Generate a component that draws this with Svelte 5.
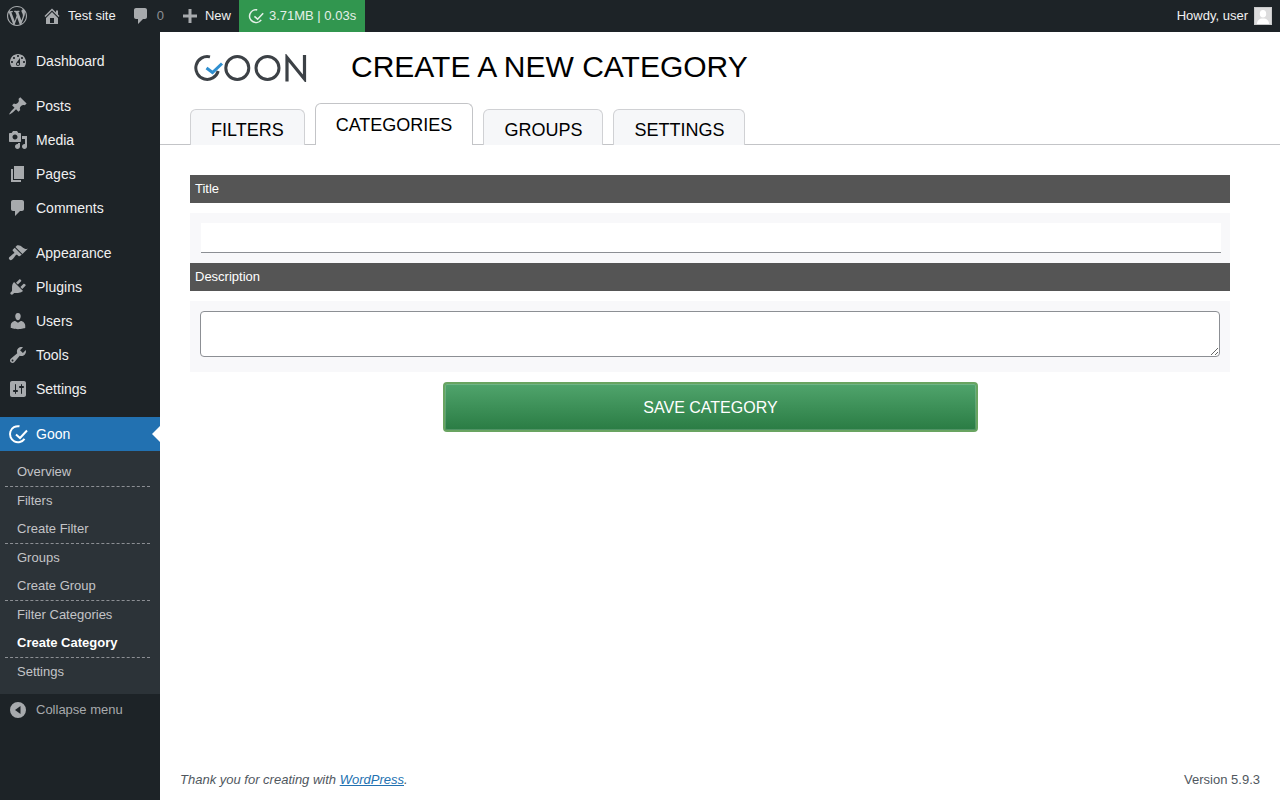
<script>
  const icons = {
    dashboard: "M3.76 16h12.48c1.1-1.37 1.76-3.11 1.76-5 0-4.42-3.58-8-8-8s-8 3.58-8 8c0 1.89.66 3.63 1.76 5zM10 4c.55 0 1 .45 1 1s-.45 1-1 1-1-.45-1-1 .45-1 1-1zM6 6c.55 0 1 .45 1 1s-.45 1-1 1-1-.45-1-1 .45-1 1-1zm8 0c.55 0 1 .45 1 1s-.45 1-1 1-1-.45-1-1 .45-1 1-1zm-5.37 5.55L12 7v6c0 1.1-.9 2-2 2s-2-.9-2-2c0-.57.24-1.08.63-1.45zM4 10c.55 0 1 .45 1 1s-.45 1-1 1-1-.45-1-1 .45-1 1-1zm12 0c.55 0 1 .45 1 1s-.45 1-1 1-1-.45-1-1 .45-1 1-1zm-5 3c0-.55-.45-1-1-1s-1 .45-1 1 .45 1 1 1 1-.45 1-1z",
    posts: "M10.44 3.02l1.82-1.82 6.36 6.35-1.83 1.82c-1.05-.68-2.48-.57-3.41.36l-.75.75c-.92.93-1.04 2.35-.35 3.41l-1.83 1.82-2.41-2.41-2.8 2.79c-.42.42-3.38 2.71-3.8 2.29s1.86-3.39 2.28-3.81l2.79-2.79L4.1 9.36l1.83-1.82c1.05.69 2.48.57 3.41-.36l.75-.75c.93-.92 1.05-2.35.35-3.41z",
    media: "M13 11V4c0-.55-.45-1-1-1h-1.67L9 1H5L3.67 3H2c-.55 0-1 .45-1 1v7c0 .55.45 1 1 1h10c.55 0 1-.45 1-1zM7 4.5c1.38 0 2.5 1.12 2.5 2.5S8.38 9.5 7 9.5 4.5 8.38 4.5 7 5.62 4.5 7 4.5zM14 6h5v10.5c0 1.38-1.12 2.5-2.5 2.5S14 17.88 14 16.5s1.12-2.5 2.5-2.5c.17 0 .34.02.5.05V9h-3V6zm-4 8.05V13h2v3.5c0 1.38-1.12 2.5-2.5 2.5S7 17.88 7 16.5 8.12 14 9.5 14c.17 0 .34.02.5.05z",
    pages: "M6 15V2h10v13H6zm-1 1h8v2H3V5h2v11z",
    comments: "M5 2h9c1.1 0 2 .9 2 2v7c0 1.1-.9 2-2 2h-2l-5 5v-5H5c-1.1 0-2-.9-2-2V4c0-1.1.9-2 2-2z",
    appearance: "M14.48 11.06L7.41 3.99l1.5-1.5c.5-.56 2.3-.47 3.51.32 1.21.8 1.43 1.28 2.91 2.1 1.18.64 2.45 1.26 4.45.85zm-.71.71L6.7 4.7 4.93 6.47c-.39.39-.39 1.02 0 1.41l1.06 1.06c.39.39.39 1.03 0 1.42-.6.6-1.43 1.11-2.21 1.69-.35.26-.7.53-1.01.84C1.43 13.71-.03 15.16 1.42 16.6c1.44 1.45 2.89-.01 4.02-1.36.3-.32.57-.67.84-1.02.57-.78 1.08-1.61 1.68-2.21.39-.39 1.03-.39 1.42 0l1.06 1.06c.39.39 1.02.39 1.41 0z",
    plugins: "M13.11 4.36L9.87 7.6 8 5.73l3.24-3.24c.35-.34 1.05-.2 1.56.32.52.51.66 1.21.31 1.55zm-8 1.77l.91-1.12 9.01 9.01-1.19.84c-.71.71-2.63 1.16-3.82 1.16H6.14L4.9 17.26c-.59.59-1.54.59-2.12 0-.59-.58-.59-1.53 0-2.12l1.24-1.24v-3.88c0-1.13.4-3.19 1.09-3.89zm7.26 3.97l3.24-3.24c.34-.35 1.04-.21 1.55.31.52.51.66 1.21.31 1.55l-3.24 3.25z",
    users: "M10 9.25c-2.27 0-2.73-3.44-2.73-3.44C7 4.02 7.82 2 9.97 2c2.16 0 2.98 2.02 2.71 3.81 0 0-.41 3.44-2.68 3.44zm0 2.57L12.72 10c2.39 0 4.52 2.33 4.52 4.53v2.49s-3.65 1.13-7.24 1.13c-3.65 0-7.24-1.13-7.24-1.13v-2.49c0-2.25 1.94-4.48 4.47-4.48z",
    tools: "M16.68 9.77c-1.34 1.34-3.3 1.67-4.95.99l-5.41 6.52c-.99.99-2.59.99-3.58 0s-.99-2.59 0-3.57l6.52-5.42c-.68-1.65-.35-3.61.99-4.95 1.28-1.28 3.12-1.62 4.72-1.06l-2.89 2.89 2.82 2.82 2.86-2.87c.53 1.58.18 3.39-1.08 4.65zM3.81 16.21c.4.39 1.04.39 1.43 0 .4-.4.4-1.04 0-1.43-.39-.4-1.03-.4-1.43 0-.39.39-.39 1.03 0 1.43z",
    settings: "M18 16V4c0-1.1-.9-2-2-2H4c-1.1 0-2 .9-2 2v12c0 1.1.9 2 2 2h12c1.1 0 2-.9 2-2zM8 11h1c.55 0 1 .45 1 1s-.45 1-1 1H8v1.5c0 .28-.22.5-.5.5s-.5-.22-.5-.5V13H6c-.55 0-1-.45-1-1s.45-1 1-1h1V5.5c0-.28.22-.5.5-.5s.5.22.5.5V11zm5-2h-1c-.55 0-1-.45-1-1s.45-1 1-1h1V5.5c0-.28.22-.5.5-.5s.5.22.5.5V7h1c.55 0 1 .45 1 1s-.45 1-1 1h-1v5.5c0 .28-.22.5-.5.5s-.5-.22-.5-.5V9z",
    wp: "M20 10c0-5.51-4.49-10-10-10C4.48 0 0 4.49 0 10c0 5.52 4.48 10 10 10 5.51 0 10-4.48 10-10zM7.78 15.37L4.37 6.22c.55-.02 1.17-.08 1.17-.08.5-.06.44-1.13-.06-1.11 0 0-1.45.11-2.37.11-.18 0-.37 0-.58-.01C4.12 2.69 6.87 1.11 10 1.11c2.33 0 4.45.87 6.05 2.34-.68-.11-1.65.39-1.65 1.58 0 .74.45 1.36.9 2.1.35.61.55 1.36.55 2.46 0 1.49-1.4 5-1.4 5l-3.03-8.37c.54-.02.82-.17.82-.17.5-.05.44-1.25-.06-1.22 0 0-1.44.12-2.38.12-.87 0-2.33-.12-2.33-.12-.5-.03-.56 1.2-.06 1.22l.92.08 1.26 3.41zM17.41 10c.24-.64.74-1.87.43-4.25.7 1.29 1.05 2.71 1.05 4.25 0 3.29-1.73 6.24-4.4 7.78.97-2.59 1.94-5.2 2.92-7.78zM6.1 18.09C3.12 16.65 1.11 13.53 1.11 10c0-1.3.23-2.48.72-3.59C3.25 10.3 4.67 14.2 6.1 18.09zm4.03-6.63l2.58 6.98c-.86.29-1.76.45-2.71.45-.79 0-1.57-.11-2.29-.33.81-2.38 1.62-4.74 2.42-7.1z",
    home: "M16 8.5l1.53 1.53-1.06 1.06L10 4.62l-6.47 6.47-1.06-1.06L10 2.5l4 4v-2h2v4zm-6-2.46l6 5.99V18H4v-5.97zM12 17v-5H8v5h4z",
    plus: "M17 8.500v3h-5.500V17h-3v-5.500H3v-3h5.500V3h3v5.500H17z",
    collapse: "M10 2a8 8 0 1 1 0 16 8 8 0 0 1 0-16zM12.500 14V6l-5.500 4z",
  };

  const menuGroups = [
    [{ icon: "dashboard", label: "Dashboard" }],
    [
      { icon: "posts", label: "Posts" },
      { icon: "media", label: "Media" },
      { icon: "pages", label: "Pages" },
      { icon: "comments", label: "Comments" },
    ],
    [
      { icon: "appearance", label: "Appearance" },
      { icon: "plugins", label: "Plugins" },
      { icon: "users", label: "Users" },
      { icon: "tools", label: "Tools" },
      { icon: "settings", label: "Settings" },
    ],
  ];

  const submenu = [
    { label: "Overview", divider: true },
    { label: "Filters" },
    { label: "Create Filter", divider: true },
    { label: "Groups" },
    { label: "Create Group", divider: true },
    { label: "Filter Categories" },
    { label: "Create Category", divider: true, current: true },
    { label: "Settings" },
  ];

  const tabs = [
    { label: "FILTERS" },
    { label: "CATEGORIES", active: true },
    { label: "GROUPS" },
    { label: "SETTINGS" },
  ];
</script>

{#snippet dashicon(name, cls)}
  <svg class={cls} viewBox="0 0 20 20" aria-hidden="true"><path class="solid" d={icons[name]} /></svg>
{/snippet}

{#snippet goonMark(cls)}
  <svg class={cls} viewBox="0 0 20 20" aria-hidden="true">
    <path class="line" d="M11.500 2.300 A8 8 0 1 0 16.500 14.800" stroke-width="2" />
    <path class="line" d="M8 10.500 L12 14 L19 6.500" stroke-width="2" />
  </svg>
{/snippet}

<div class="adminbar">
  <div class="bar-item logo">{@render dashicon("wp", "bar-wp")}</div>
  <div class="bar-item site">{@render dashicon("home", "bar-icon")}<span>Test site</span></div>
  <div class="bar-item count">{@render dashicon("comments", "bar-icon")}<span>0</span></div>
  <div class="bar-item new">{@render dashicon("plus", "bar-icon")}<span>New</span></div>
  <div class="bar-item stats">{@render goonMark("bar-goon")}<span>3.71MB | 0.03s</span></div>
  <div class="bar-item howdy">
    <span>Howdy, user</span>
    <svg class="avatar" viewBox="0 0 18 18" aria-hidden="true">
      <rect width="18" height="18" fill="#c9cacb" />
      <rect x="1" y="1" width="16" height="16" fill="#dcdcdd" />
      <ellipse cx="9" cy="6.800" rx="3.200" ry="3.800" fill="#fff" />
      <path d="M3 17c0-3.500 2.200-5.500 6-5.500s6 2 6 5.500z" fill="#fff" />
    </svg>
  </div>
</div>

<div class="layout">
  <nav class="sidebar">
    {#each menuGroups as group}
      <ul class="menu-group">
        {#each group as item}
          <li class="menu-item">{@render dashicon(item.icon, "menu-icon")}<span>{item.label}</span></li>
        {/each}
      </ul>
    {/each}
    <div class="menu-item current">{@render goonMark("goon-icon")}<span>Goon</span></div>
    <ul class="submenu">
      {#each submenu as sub}
        <li class:divider={sub.divider} class:on={sub.current}>{sub.label}</li>
      {/each}
    </ul>
    <div class="collapse">{@render dashicon("collapse", "menu-icon")}<span>Collapse menu</span></div>
  </nav>

  <main class="content">
    <header class="head">
      <svg class="brand" viewBox="0 0 113 28" role="img" aria-label="Goon">
        <path class="logo-line" d="M16 2.900 A11.400 11.400 0 1 0 24.200 17" stroke="#3c4146" stroke-width="3" />
        <path class="logo-line" d="M12.500 14 L18.500 18.500 L28 9.500" stroke="#2f8fd0" stroke-width="3" />
        <circle class="logo-line" cx="43.300" cy="14" r="11.500" stroke="#3c4146" stroke-width="3" />
        <circle class="logo-line" cx="73.500" cy="14" r="11.500" stroke="#3c4146" stroke-width="3" />
        <path class="logo-line" d="M93 27.500 V3.500 L110.500 25 V1" stroke="#3c4146" stroke-width="3.200" />
      </svg>
      <h1>CREATE A NEW CATEGORY</h1>
    </header>

    <div class="tabs">
      {#each tabs as tab}
        <div class="tab" class:active={tab.active}>{tab.label}</div>
      {/each}
    </div>

    <form class="form">
      <div class="label">Title</div>
      <div class="field title-field"><input type="text" /></div>
      <div class="label">Description</div>
      <div class="field desc-field"><textarea></textarea></div>
      <div class="actions"><button type="button" class="save">SAVE CATEGORY</button></div>
    </form>

    <footer class="footer">
      <span class="thanks">Thank you for creating with <a href="#wp">WordPress</a>.</span>
      <span>Version 5.9.3</span>
    </footer>
  </main>
</div>

<style>
  :global(body) {
    background: #fff;
    font-family: "Liberation Sans", Arial, sans-serif;
  }
  ul {
    list-style: none;
    margin: 0;
    padding: 0;
  }
  svg {
    display: block;
    flex: none;
  }
  :global(.solid) {
    fill: currentColor;
  }
  :global(.line) {
    fill: none;
    stroke: currentColor;
  }
  .logo-line {
    fill: none;
  }

  .adminbar {
    display: flex;
    height: 32px;
    background: #1d2327;
    color: #f0f0f1;
    font-size: 13px;
  }
  .bar-item {
    display: flex;
    align-items: center;
  }
  .bar-item span {
    margin-top: -1px;
  }
  :global(.bar-icon) {
    width: 20px;
    height: 20px;
    color: #a7aaad;
  }
  .logo {
    padding: 0 0 0 7px;
    color: #a7aaad;
  }
  :global(.bar-wp) {
    width: 20px;
    height: 20px;
  }
  .site {
    padding-left: 15px;
    gap: 6px;
  }
  .count {
    padding-left: 15px;
    gap: 6px;
    color: #8c8f94;
  }
  .new {
    padding-left: 16px;
    gap: 5px;
  }
  .stats {
    margin-left: 8px;
    padding: 0 9px;
    gap: 5px;
    background: #31964f;
    color: #e4f0e8;
  }
  :global(.bar-goon) {
    width: 16px;
    height: 16px;
  }
  .howdy {
    margin-left: auto;
    padding-right: 8px;
    gap: 6px;
  }
  .avatar {
    width: 18px;
    height: 18px;
  }

  .layout {
    display: flex;
    height: 768px;
  }
  .sidebar {
    width: 160px;
    flex: none;
    padding-top: 12px;
    background: #1d2327;
  }
  .menu-group {
    margin-bottom: 11px;
  }
  .menu-item {
    position: relative;
    display: flex;
    align-items: center;
    gap: 8px;
    height: 34px;
    padding-left: 8px;
    color: #f0f0f1;
    font-size: 14px;
  }
  :global(.menu-icon) {
    width: 20px;
    height: 20px;
    color: #a7aaad;
  }
  .current {
    background: #2271b1;
    color: #fff;
  }
  .current::after {
    content: "";
    position: absolute;
    right: 0;
    top: 9px;
    border: 8px solid transparent;
    border-left: 0;
    border-right-color: #fff;
  }
  :global(.goon-icon) {
    width: 20px;
    height: 20px;
    color: #fff;
  }
  .submenu {
    padding: 7px 0 8px;
    background: #2c3338;
    color: #c3c4c7;
    font-size: 13px;
  }
  .submenu li {
    position: relative;
    height: 28px;
    padding-left: 17px;
    line-height: 28px;
  }
  .submenu li.divider {
    height: 29px;
  }
  .submenu li.divider::after {
    content: "";
    position: absolute;
    left: 5px;
    right: 10px;
    bottom: 0;
    border-bottom: 1px dashed #8c8f94;
  }
  .submenu li.on {
    color: #fff;
    font-weight: 700;
  }
  .collapse {
    display: flex;
    align-items: center;
    gap: 8px;
    height: 32px;
    padding-left: 8px;
    color: #a7aaad;
    font-size: 13px;
  }
  .collapse span {
    margin-top: -2px;
  }

  .content {
    flex: 1;
    display: flex;
    flex-direction: column;
    min-width: 0;
  }
  .head {
    display: flex;
    align-items: center;
    gap: 44px;
    height: 70px;
    padding-left: 34px;
  }
  .brand {
    width: 113px;
    height: 28px;
    margin-top: 2px;
  }
  h1 {
    margin: 0;
    color: #000;
    font-size: 30px;
    font-weight: 400;
    line-height: 1;
    white-space: nowrap;
  }
  .tabs {
    display: flex;
    align-items: flex-end;
    gap: 10px;
    height: 42px;
    padding-left: 30px;
    border-bottom: 1px solid #c3c4c7;
  }
  .tab {
    box-sizing: border-box;
    height: 36px;
    margin-bottom: -1px;
    padding: 10px 20px 0;
    background: #f6f7f9;
    border: 1px solid #d0d1d4;
    border-bottom: 0;
    border-radius: 6px 6px 0 0;
    color: #000;
    font-size: 18px;
    line-height: 21px;
  }
  .tab.active {
    height: 42px;
    padding-top: 11px;
    background: #fff;
    border-color: #c3c4c7;
  }
  .form {
    display: flex;
    flex-direction: column;
    margin: 30px 50px 0 30px;
  }
  .label {
    height: 28px;
    padding-left: 5px;
    background: #555;
    color: #fff;
    font-size: 13px;
    line-height: 28px;
  }
  .field {
    box-sizing: border-box;
    margin-top: 10px;
    background: #f8f8fa;
  }
  .title-field {
    height: 50px;
    padding: 10px 9px 0 11px;
  }
  .title-field input {
    display: block;
    box-sizing: border-box;
    width: 100%;
    height: 30px;
    padding: 0;
    background: #fff;
    border: 0;
    border-bottom: 1px solid #8c8f94;
    border-radius: 0;
    outline: 0;
  }
  .desc-field {
    height: 71px;
    padding: 10px 10px 0;
  }
  .desc-field textarea {
    display: block;
    box-sizing: border-box;
    width: 100%;
    height: 46px;
    background: #fff;
    border: 1px solid #8c8f94;
    border-radius: 4px;
    outline: 0;
  }
  .actions {
    display: flex;
    justify-content: center;
    margin: 10px 0 0 1px;
  }
  .save {
    box-sizing: border-box;
    width: 535px;
    height: 50px;
    padding: 2px 0 0;
    background: linear-gradient(#50a46c, #2a7c44);
    border: 2px solid #69a461;
    border-radius: 4px;
    box-shadow: inset 0 0 0 1px rgba(255, 255, 255, 0.18);
    color: #fff;
    font-family: inherit;
    font-size: 16px;
  }
  .footer {
    display: flex;
    justify-content: space-between;
    margin-top: auto;
    padding: 0 20px 13px;
    color: #50575e;
    font-size: 13px;
    line-height: 15px;
  }
  .thanks {
    font-style: italic;
  }
  .thanks a {
    color: #2271b1;
  }
</style>
